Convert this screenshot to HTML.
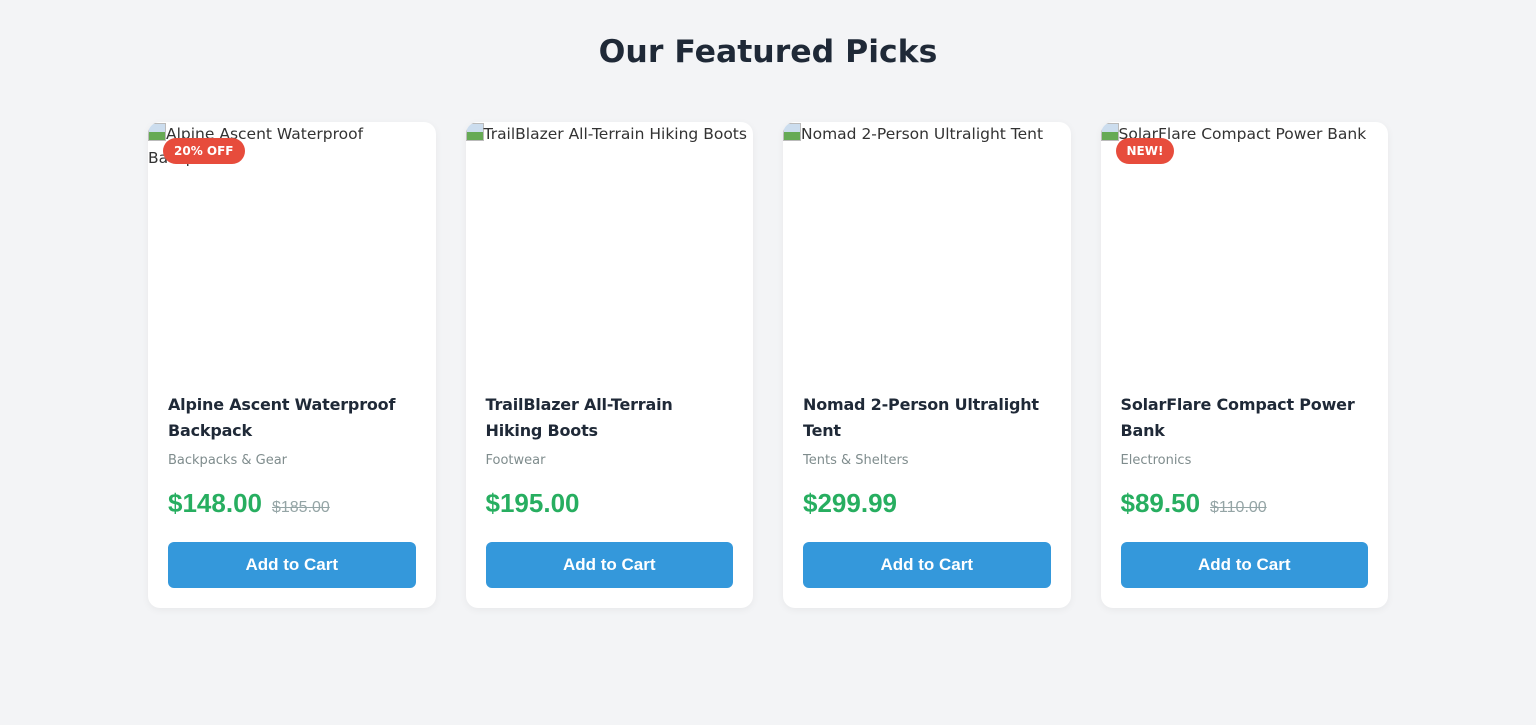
<!DOCTYPE html>
<html><head><style>
*{box-sizing:border-box;margin:0;padding:0}
body{width:1536px;height:725px;background:#f3f4f6;font-family:"DejaVu Sans",sans-serif;color:#1f2937;overflow:hidden}
h1{position:absolute;top:34px;left:0;width:1536px;text-align:center;font-size:31.5px;font-weight:700;color:#1f2937;letter-spacing:0}
.grid{position:absolute;top:122px;left:148px;width:1240px;display:flex;gap:30px}
.card{width:287.5px;height:486px;background:#fff;border-radius:12px;box-shadow:0 2px 8px rgba(0,0,0,.05);position:relative;overflow:hidden}
.img{height:250px;font-size:15.5px;color:#333;line-height:24px;white-space:normal}
.img:before{content:"";display:inline-block;width:16px;height:16px;vertical-align:-2px;background:linear-gradient(#cde 50%,#6a5 50%);border:1px solid #bbb}
.badge{position:absolute;top:16px;left:15px;background:#e74c3c;color:#fff;font-size:12px;font-weight:700;padding:6px 11px;border-radius:14px}
.body{padding:0 20px}
.t{font-size:16px;font-weight:700;line-height:26px;margin-top:20px;height:52px;letter-spacing:-0.2px}
.c{font-size:13px;color:#7f8c8d;margin-top:9px}
.p{margin-top:20px;height:36px;display:flex;align-items:baseline;gap:10px;font-family:"Liberation Sans",sans-serif}
.p b{font-size:26px;color:#27ae60}
.p s{font-size:16px;color:#95a5a6}
.btn{margin-top:18px;height:46px;background:#3498db;color:#fff;border-radius:6px;font-size:17px;font-weight:700;text-align:center;line-height:46px;font-family:"Liberation Sans",sans-serif}
</style></head><body>
<h1>Our Featured Picks</h1>
<div class="grid">
<div class="card"><div class="img">Alpine Ascent Waterproof Backpack</div><div class="badge">20% OFF</div><div class="body"><div class="t">Alpine Ascent Waterproof Backpack</div><div class="c">Backpacks &amp; Gear</div><div class="p"><b>$148.00</b><s>$185.00</s></div><div class="btn">Add to Cart</div></div></div>
<div class="card"><div class="img">TrailBlazer All-Terrain Hiking Boots</div><div class="body"><div class="t">TrailBlazer All-Terrain Hiking Boots</div><div class="c">Footwear</div><div class="p"><b>$195.00</b></div><div class="btn">Add to Cart</div></div></div>
<div class="card"><div class="img">Nomad 2-Person Ultralight Tent</div><div class="body"><div class="t">Nomad 2-Person Ultralight Tent</div><div class="c">Tents &amp; Shelters</div><div class="p"><b>$299.99</b></div><div class="btn">Add to Cart</div></div></div>
<div class="card"><div class="img">SolarFlare Compact Power Bank</div><div class="badge">NEW!</div><div class="body"><div class="t">SolarFlare Compact Power Bank</div><div class="c">Electronics</div><div class="p"><b>$89.50</b><s>$110.00</s></div><div class="btn">Add to Cart</div></div></div>
</div>
</body></html>
